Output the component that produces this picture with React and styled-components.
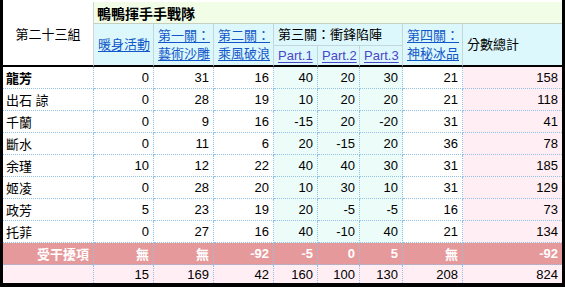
import React from "react";
import styled, { createGlobalStyle, css } from "styled-components";

const GlobalStyle = createGlobalStyle`
  *, *::before, *::after { box-sizing: border-box; }
  html, body { margin: 0; padding: 0; background: #ffffff; }
  body {
    font-family: "Liberation Sans", "Noto Sans CJK TC", Arial, sans-serif;
    font-size: 13px;
    color: #000;
  }
`;

const HEAD_LINE = "#c3d6da";
const GRID_DOT = "#93c1e6";

const Frame = styled.div`
  width: 565px;
  height: 287px;
  background: #000;
  padding: 0 3px 4px 3px;
`;

const Sheet = styled.div`
  display: grid;
  grid-template-columns: 91px 60px 60px 60px 44px 42px 43px 60px 99px;
  grid-template-rows: 22px 22px 21px repeat(9, 22px) 18px;
  background: #fff;
  padding-top: 2px;
  height: 283px;
`;

const headBase = css`
  border-right: 1px solid ${HEAD_LINE};
  border-bottom: 1px solid ${HEAD_LINE};
  background: #dcf8fc;
  display: flex;
  align-items: center;
  padding: 0 3px 0 4px;
  line-height: 18px;
  white-space: nowrap;
`;

const CornerCell = styled.div`
  grid-column: 1;
  grid-row: 1 / span 3;
  background: #fff;
  border-right: 1px solid #d4d4d4;
  border-bottom: 2px solid #000;
  display: flex;
  align-items: center;
  justify-content: center;
  font-size: 13px;
`;

const TitleCell = styled.div`
  grid-column: 2 / span 8;
  grid-row: 1;
  background: #f1fde6;
  border-bottom: 1px solid #c6cfc0;
  display: flex;
  align-items: center;
  padding-left: 3px;
  font-weight: bold;
  font-size: 14px;
  letter-spacing: 0px;
`;

const HeadCell = styled.div`
  ${headBase};
  grid-column: ${(p) => p.$col} / span ${(p) => p.$cols || 1};
  grid-row: ${(p) => p.$row} / span ${(p) => p.$rows || 1};
  ${(p) => p.$last && css`border-right: none;`}
  ${(p) => p.$bottom && css`border-bottom: 2px solid #000;`}
`;

const HeadLink = styled.a`
  color: ${(p) => (p.$part ? "#4b45c8" : "#1257c9")};
  text-decoration: underline;
  text-underline-offset: 2px;
  cursor: pointer;
`;

const tones = {
  plain: "#ffffff",
  part: "#ebfcf9",
  sum: "#ffeef4",
  penalty: "#e6999a",
  total: "#ffeef4",
};

const Cell = styled.div`
  background: ${(p) => tones[p.$tone]};
  border-right: ${(p) => (p.$last ? "none" : `1px dotted ${GRID_DOT}`)};
  border-bottom: ${(p) => (p.$noBottom ? "none" : `1px dotted ${GRID_DOT}`)};
  display: flex;
  align-items: center;
  justify-content: ${(p) => (p.$left ? "flex-start" : "flex-end")};
  padding: ${(p) => (p.$left ? "0 0 0 3px" : "0 4px 0 0")};
  white-space: nowrap;
  font-weight: ${(p) => (p.$bold ? "bold" : "normal")};
  color: ${(p) => (p.$white ? "#fff" : "#000")};
`;

const players = [
  { name: "龍芳", bold: true, v: [0, 31, 16, 40, 20, 30, 21, 158] },
  { name: "出石 諒", v: [0, 28, 19, 10, 20, 20, 21, 118] },
  { name: "千蘭", v: [0, 9, 16, -15, 20, -20, 31, 41] },
  { name: "斷水", v: [0, 11, 6, 20, -15, 20, 36, 78] },
  { name: "余瑾", v: [10, 12, 22, 40, 40, 30, 31, 185] },
  { name: "姬凌", v: [0, 28, 20, 10, 30, 10, 31, 129] },
  { name: "政芳", v: [5, 23, 19, 20, -5, -5, 16, 73] },
  { name: "托菲", v: [0, 27, 16, 40, -10, 40, 21, 134] },
];

const penalty = ["無", "無", "-92", "-5", "0", "5", "無", "-92"];
const totals = [15, 169, 42, 160, 100, 130, 208, 824];

const toneFor = (i) => {
  if (i >= 3 && i <= 5) return "part";
  if (i === 7) return "sum";
  return "plain";
};

export default function App() {
  return (
    <>
      <GlobalStyle />
      <Frame>
        <Sheet>
          <CornerCell>第二十三組</CornerCell>
          <TitleCell>鴨鴨揮手手戰隊</TitleCell>

          <HeadCell $col={2} $row={2} $rows={2} $bottom>
            <HeadLink>暖身活動</HeadLink>
          </HeadCell>
          <HeadCell $col={3} $row={2} $rows={2} $bottom>
            <HeadLink>第一關：<br />藝術沙雕</HeadLink>
          </HeadCell>
          <HeadCell $col={4} $row={2} $rows={2} $bottom>
            <HeadLink>第二關：<br />乘風破浪</HeadLink>
          </HeadCell>
          <HeadCell $col={5} $cols={3} $row={2}>
            第三關：衝鋒陷陣
          </HeadCell>
          <HeadCell $col={5} $row={3} $bottom>
            <HeadLink $part>Part.1</HeadLink>
          </HeadCell>
          <HeadCell $col={6} $row={3} $bottom>
            <HeadLink $part>Part.2</HeadLink>
          </HeadCell>
          <HeadCell $col={7} $row={3} $bottom>
            <HeadLink $part>Part.3</HeadLink>
          </HeadCell>
          <HeadCell $col={8} $row={2} $rows={2} $bottom>
            <HeadLink>第四關：<br />神秘冰品</HeadLink>
          </HeadCell>
          <HeadCell $col={9} $row={2} $rows={2} $bottom $last>
            分數總計
          </HeadCell>

          {players.map((p) => (
            <React.Fragment key={p.name}>
              <Cell $tone="plain" $left $bold={p.bold}>
                {p.name}
              </Cell>
              {p.v.map((n, i) => (
                <Cell key={i} $tone={toneFor(i)} $last={i === 7}>
                  {n}
                </Cell>
              ))}
            </React.Fragment>
          ))}

          <Cell $tone="penalty" $bold $white>
            受干擾項
          </Cell>
          {penalty.map((t, i) => (
            <Cell key={i} $tone="penalty" $bold $white $last={i === 7}>
              {t}
            </Cell>
          ))}

          <Cell $tone="total" $noBottom />
          {totals.map((n, i) => (
            <Cell key={i} $tone="total" $noBottom $last={i === 7}>
              {n}
            </Cell>
          ))}
        </Sheet>
      </Frame>
    </>
  );
}
